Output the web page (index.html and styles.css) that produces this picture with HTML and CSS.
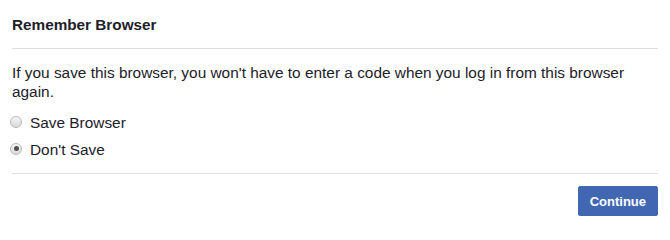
FILE: index.html
```html
<!DOCTYPE html>
<html>
<head>
<meta charset="utf-8">
<link rel="stylesheet" href="styles.css">
</head>
<body>
<div class="dialog">
  <div class="header">Remember Browser</div>
  <div class="content">
    <p class="desc">If you save this browser, you won't have to enter a code when you log in from this browser again.</p>
    <label class="option"><input type="radio" name="save" class="radio"><span>Save Browser</span></label>
    <label class="option"><input type="radio" name="save" class="radio" checked><span>Don't Save</span></label>
  </div>
  <div class="footer">
    <button class="btn">Continue</button>
  </div>
</div>
</body>
</html>
```
FILE: styles.css
```css
html, body {
  margin: 0;
  padding: 0;
  background: #fff;
}
body {
  font-family: "Liberation Sans", Arial, Helvetica, sans-serif;
  color: #1d2129;
}
.dialog {
  padding: 0 12px;
}
.header {
  font-size: 15.3px;
  font-weight: bold;
  line-height: 19px;
  padding: 15px 0 14px;
  border-bottom: 1px solid #dddfe2;
}
.content {
  padding: 14px 0 10px;
  border-bottom: 1px solid #dddfe2;
}
.desc {
  margin: 0 0 8px;
  font-size: 15.4px;
  line-height: 19px;
}
.option {
  display: flex;
  align-items: center;
  gap: 8px;
  font-size: 15.4px;
  line-height: 19px;
  padding: 4px 0;
}
.radio {
  appearance: none;
  -webkit-appearance: none;
  margin: -2px 0 0 -2px;
  width: 12px;
  height: 12px;
  flex: none;
  border-radius: 50%;
  border: 1px solid #b8b8b8;
  background: linear-gradient(#f6f6f6, #d9d9d9);
  box-sizing: border-box;
  position: relative;
}
.radio:checked::after {
  content: "";
  position: absolute;
  left: 2.5px;
  top: 2.5px;
  width: 5px;
  height: 5px;
  border-radius: 50%;
  background: #4f4f4f;
}
.footer {
  display: flex;
  justify-content: flex-end;
  padding: 12px 0;
}
.btn {
  background: #4267b2;
  border: 1px solid #4267b2;
  border-radius: 2px;
  color: #fff;
  font-family: "Liberation Sans", Arial, Helvetica, sans-serif;
  font-weight: bold;
  font-size: 13px;
  height: 30px;
  padding: 0 11px;
}
```
